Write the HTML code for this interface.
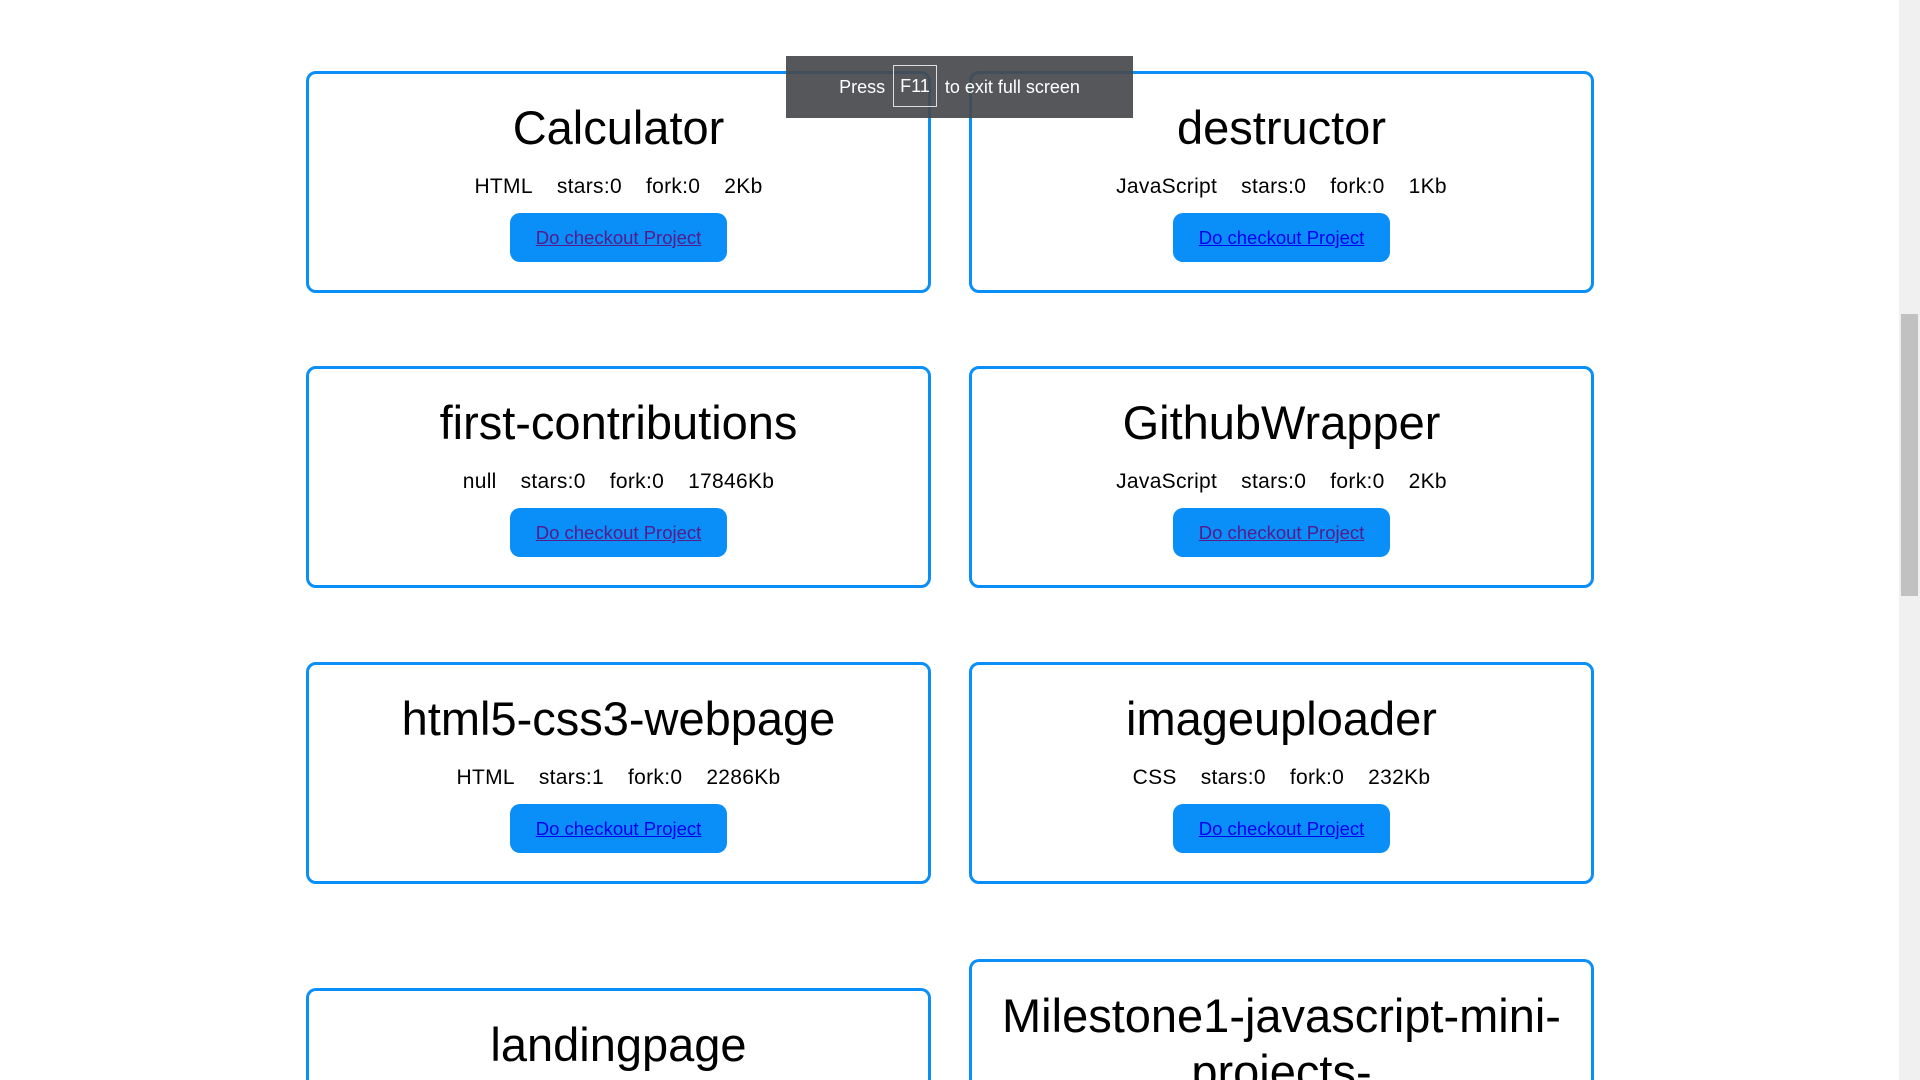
<!DOCTYPE html>
<html><head><meta charset="utf-8"><style>
html,body{margin:0;padding:0;width:1920px;height:1080px;overflow:hidden;background:#fff;font-family:"Liberation Sans",sans-serif;}
#wrap{position:relative;width:1920px;height:1080px;overflow:hidden}
.card{position:absolute;width:619px;border:3px solid #0a8ef8;border-radius:10px;box-sizing:content-box;text-align:center;color:#000;overflow:hidden}
.card.open{border-bottom:none;border-radius:10px 10px 0 0}
.card h2{margin:0;font-weight:400;font-size:47px;line-height:56px;}
.meta{font-size:21px;margin-top:19px;height:26px;letter-spacing:0.3px}
.meta span{margin:0 12px;}
.btn{display:inline-block;margin-top:12px;width:217px;height:49px;line-height:49px;background:#0a8ef8;border-radius:10px;font-size:18.5px;}
.btn a{text-decoration:underline;color:#0000ee}
.btn a.v{color:#551a8b}
.sb{position:absolute;right:0;top:0;width:21px;height:1080px;background:#f0f0f0}
.thumb{position:absolute;left:2px;width:17px;top:314px;height:282px;background:#c1c1c1}
.ov{position:absolute;left:786px;top:56px;width:347px;height:62px;background:rgba(70,73,77,.92);color:#fff;font-size:18px;line-height:62px;text-align:center}
.key{display:inline-block;border:1px solid #ddd;height:40px;line-height:40px;padding:0 6px;margin:0 8px;vertical-align:middle;position:relative;top:-2px}
</style></head><body><div id="wrap">
<div class="card" style="left:306px;top:71px;height:216px">
<h2 style="margin-top:26px">Calculator</h2>
<div class="meta"><span>HTML</span><span>stars:0</span><span>fork:0</span><span>2Kb</span></div>
<div class="btn"><a class="v">Do checkout Project</a></div></div>
<div class="card" style="left:969px;top:71px;height:216px">
<h2 style="margin-top:26px">destructor</h2>
<div class="meta"><span>JavaScript</span><span>stars:0</span><span>fork:0</span><span>1Kb</span></div>
<div class="btn"><a>Do checkout Project</a></div></div>
<div class="card" style="left:306px;top:366px;height:216px">
<h2 style="margin-top:26px">first-contributions</h2>
<div class="meta"><span>null</span><span>stars:0</span><span>fork:0</span><span>17846Kb</span></div>
<div class="btn"><a class="v">Do checkout Project</a></div></div>
<div class="card" style="left:969px;top:366px;height:216px">
<h2 style="margin-top:26px">GithubWrapper</h2>
<div class="meta"><span>JavaScript</span><span>stars:0</span><span>fork:0</span><span>2Kb</span></div>
<div class="btn"><a class="v">Do checkout Project</a></div></div>
<div class="card" style="left:306px;top:662px;height:216px">
<h2 style="margin-top:26px">html5-css3-webpage</h2>
<div class="meta"><span>HTML</span><span>stars:1</span><span>fork:0</span><span>2286Kb</span></div>
<div class="btn"><a>Do checkout Project</a></div></div>
<div class="card" style="left:969px;top:662px;height:216px">
<h2 style="margin-top:26px">imageuploader</h2>
<div class="meta"><span>CSS</span><span>stars:0</span><span>fork:0</span><span>232Kb</span></div>
<div class="btn"><a>Do checkout Project</a></div></div>
<div class="card open" style="left:306px;top:988px;height:92px">
<h2 style="margin-top:26px">landingpage</h2></div>
<div class="card open" style="left:969px;top:959px;height:121px">
<h2 style="margin-top:26px">Milestone1-javascript-mini-<br>projects-</h2></div>
<div class="ov">Press<span class="key">F11</span>to exit full screen</div>
<div class="sb"><div class="thumb"></div></div>
</div></body></html>
